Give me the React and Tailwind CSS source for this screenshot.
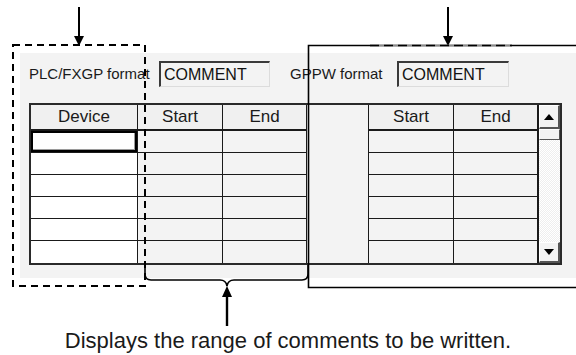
import React from 'react';

const font = { fontFamily: '"Liberation Sans", Arial, sans-serif' };

function TextBox({ width }) {
  return (
    <div
      className={`${width} h-[26px] flex items-center pl-[3px] bg-[#f3f3f3] border-t-2 border-l-2 border-b border-r border-t-[#3a3a3a] border-l-[#3a3a3a] border-b-[#dcdcdc] border-r-[#dcdcdc] text-[16px] text-[#111]`}
    >
      COMMENT
    </div>
  );
}

function Tri({ up }) {
  return (
    <svg width="10" height="6" viewBox="0 0 10 6">
      <polygon points={up ? '0,6 10,6 5,0' : '0,0 10,0 5,6'} fill="#000" />
    </svg>
  );
}

function ScrollButton({ up, height }) {
  return (
    <div
      className={`${height} flex items-center justify-center bg-[#f3f3f3] border-t border-l border-t-white border-l-white border-b-2 border-r-2 border-b-[#555] border-r-[#555]`}
    >
      <Tri up={up} />
    </div>
  );
}

const rows = [0, 1, 2, 3, 4, 5];

function Cell({ white, last, selected }) {
  return (
    <div
      className={`h-[22px] ${last ? '' : 'border-b border-b-[#1a1a1a]'} border-r border-r-[#1a1a1a] ${
        white ? 'bg-white' : 'bg-[#f3f3f3]'
      }`}
    >
      {selected && (
        <div className="h-full w-full border-2 border-black shadow-[inset_-1px_-1px_0_#9a9a9a]" />
      )}
    </div>
  );
}

function Column({ width, title, white, selectFirst }) {
  return (
    <div className={`${width} flex flex-col`}>
      <div className="h-[26px] flex items-center justify-center bg-[#f0f0f0] border-b-2 border-b-[#1a1a1a] border-r border-r-[#1a1a1a] text-[17px] text-[#1a1a1a]">
        {title}
      </div>
      {rows.map((r) => (
        <Cell key={r} white={white} last={r === 5} selected={selectFirst && r === 0} />
      ))}
    </div>
  );
}

function Grid() {
  return (
    <div className="ml-[9px] mt-[16px] w-[533px] h-[162px] border-2 border-[#2a2a2a] flex bg-[#f3f3f3]">
      <Column width="w-[107px]" title="Device" white selectFirst />
      <Column width="w-[85px]" title="Start" />
      <Column width="w-[84px]" title="End" />
      <div className="w-[62px] h-full border-r border-r-[#1a1a1a] bg-[#f3f3f3]" />
      <Column width="w-[85px]" title="Start" />
      <Column width="w-[84px]" title="End" />
      <div className="w-[22px] h-full flex flex-col border-l border-l-[#1a1a1a]">
        <ScrollButton up height="h-[24px]" />
        <div className="h-[11px] bg-[#f3f3f3] border-t border-l border-t-white border-l-white border-b border-r border-b-[#555] border-r-[#555]" />
        <div className="flex-1 bg-[repeating-conic-gradient(#ffffff_0_25%,#eeeeee_0_50%)] bg-[length:2px_2px]" />
        <ScrollButton height="h-[21px]" />
      </div>
    </div>
  );
}

function Annotations() {
  return (
    <svg className="absolute inset-0 pointer-events-none" width="576" height="355" viewBox="0 0 576 355">
      {/* top arrows */}
      <line x1="79" y1="7" x2="79" y2="38" stroke="#000" strokeWidth="2" />
      <polygon points="74,36 84,36 79,46" fill="#000" />
      <line x1="448" y1="7" x2="448" y2="38" stroke="#000" strokeWidth="2" />
      <polygon points="443,36 453,36 448,46" fill="#000" />

      {/* dashed box round the device column */}
      <rect x="13" y="45" width="132" height="241" fill="none" stroke="#000" strokeWidth="2" strokeDasharray="7 5" />

      {/* solid box round the GPPW side */}
      <path d="M576 45.5 H308.5 V287.5 H576" fill="none" stroke="#000" strokeWidth="1.6" />
      <line x1="370" y1="45.5" x2="512" y2="45.5" stroke="#8a8a8a" strokeWidth="1.6" />
      <line x1="370" y1="45.5" x2="512" y2="45.5" stroke="#000" strokeWidth="1.6" strokeDasharray="9 5" />

      {/* brace under start / end */}
      <path
        d="M145 265 V274 Q145 280 151 280 H220 Q226 280 227 286 Q228 280 234 280 H302 Q308 280 308 274 V265"
        fill="none"
        stroke="#000"
        strokeWidth="1.6"
      />
      <line x1="227" y1="296" x2="227" y2="326" stroke="#000" strokeWidth="2.4" />
      <polygon points="222,297 232,297 227,286" fill="#000" />
    </svg>
  );
}

export default function App() {
  return (
    <div className="relative w-[576px] h-[355px] bg-white overflow-hidden" style={font}>
      <div className="pt-[53px] pl-[20px]">
        <div className="w-[556px] h-[225px] bg-[#f3f3f3] pt-[8px]">
          <div className="flex items-center h-[26px]">
            <span className="w-[139px] pl-[9px] text-[15px] text-[#1a1a1a] whitespace-nowrap">PLC/FXGP format</span>
            <TextBox width="w-[111px]" />
            <span className="w-[127px] pl-[20px] text-[15px] text-[#1a1a1a] whitespace-nowrap">GPPW format</span>
            <TextBox width="w-[112px]" />
          </div>
          <Grid />
        </div>
      </div>
      <p className="mt-[50px] text-center text-[22px] leading-[26px] text-[#1a1a1a]">
        Displays the range of comments to be written.
      </p>
      <Annotations />
    </div>
  );
}
